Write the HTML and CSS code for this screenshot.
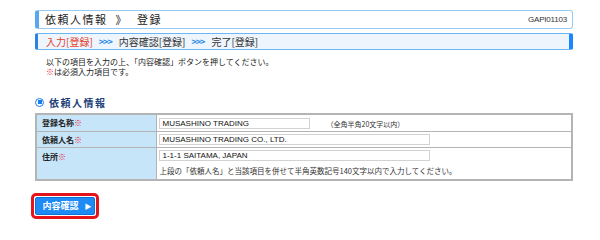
FILE: index.html
```html
<!DOCTYPE html>
<html lang="ja">
<head>
<meta charset="utf-8">
<link rel="stylesheet" href="styles.css">
</head>
<body>
<div class="page">
  <div class="header">
    <span class="title">依頼人情報<span class="sep">》</span>登録</span>
    <span class="code">GAPI01103</span>
  </div>
  <div class="steps">
    <span class="step current">入力[登録]</span>
    <span class="arrow">&gt;&gt;&gt;</span>
    <span class="step">内容確認[登録]</span>
    <span class="arrow">&gt;&gt;&gt;</span>
    <span class="step">完了[登録]</span>
  </div>
  <div class="intro">
    <p>以下の項目を入力の上、「内容確認」ボタンを押してください。</p>
    <p><span class="req">※</span>は必須入力項目です。</p>
  </div>
  <div class="section">
    <span class="bullet"><span class="dot"></span></span>
    <span class="section-title">依頼人情報</span>
  </div>
  <table class="form">
    <tr class="r1">
      <th>登録名称<span class="req">※</span></th>
      <td><div class="field"><span class="input w-short">MUSASHINO TRADING</span><span class="hint">（全角半角20文字以内）</span></div></td>
    </tr>
    <tr class="r2">
      <th>依頼人名<span class="req">※</span></th>
      <td><div class="field"><span class="input w-long">MUSASHINO TRADING CO., LTD.</span></div></td>
    </tr>
    <tr class="r3">
      <th>住所<span class="req">※</span></th>
      <td>
        <div class="field"><span class="input w-long">1-1-1 SAITAMA, JAPAN</span></div>
        <div class="note">上段の「依頼人名」と当該項目を併せて半角英数記号140文字以内で入力してください。</div>
      </td>
    </tr>
  </table>
  <div class="actions">
    <div class="focus-ring"><button class="btn">内容確認 <span class="tri">▶</span></button></div>
  </div>
</div>
</body>
</html>
```
FILE: styles.css
```css
* { box-sizing: border-box; }
html, body { margin: 0; padding: 0; background: #fff; }
body {
  font-family: "Noto Sans CJK JP", "Liberation Sans", sans-serif;
  color: #222;
  width: 600px;
  height: 231px;
  overflow: hidden;
}
.page { margin-left: 35px; width: 538px; padding-top: 10px; }

.header {
  height: 19px;
  border: 1px solid #95cbf2;
  border-left: 4px solid #5aa7ee;
  border-radius: 3px;
  display: flex;
  align-items: center;
  justify-content: space-between;
  padding: 0 5px 0 6px;
}
.title { font-size: 11px; letter-spacing: 1.5px; color: #222; line-height: 1; }
.sep { margin: 0 9px 0 8px; }
.code { font-family: "Liberation Sans", sans-serif; font-size: 8px; color: #333; letter-spacing: -0.2px; }

.steps {
  margin-top: 4px;
  height: 17px;
  background: #eef5fd;
  border: 1px solid #6db6f5;
  border-left: 3px solid #2a82e6;
  border-right: 4px solid #1a86ff;
  border-radius: 2px;
  display: flex;
  align-items: center;
  padding-left: 8px;
  font-size: 10px;
  line-height: 1;
}
.step { color: #333; }
.step.current { color: #e4402a; }
.arrow { color: #2a8ae4; font-size: 9px; font-weight: bold; letter-spacing: -1px; margin: 0 7px 0 6px; }

.intro { margin-top: 7px; padding-left: 11px; font-size: 8px; line-height: 9.5px; color: #222; }
.intro p { margin: 0; }
.req { color: #e8203a; }

.section { margin-top: 20px; display: flex; align-items: center; height: 12px; }
.bullet {
  width: 9px; height: 9px; border: 1.5px solid #1a7ee8; border-radius: 50%;
  display: flex; align-items: center; justify-content: center; margin-right: 5px;
}
.dot { width: 4px; height: 4px; background: #1a7ee8; }
.section-title { font-size: 10px; font-weight: bold; color: #1d3f78; letter-spacing: 1.5px; }

.form {
  margin-top: 5px;
  width: 538px;
  border-collapse: collapse;
  border: 2px solid #b4b4b4;
  font-size: 8px;
}
.form th, .form td { border: 1px solid #b4b4b4; padding: 0; }
.form th {
  width: 120px;
  background: #c7e5f8;
  text-align: left;
  font-weight: bold;
  padding-left: 5px;
  color: #222;
  vertical-align: middle;
}
.form .r3 th { vertical-align: top; padding-top: 3px; }
.form td { padding-left: 2px; vertical-align: top; }
.r1 { height: 17px; }
.r2 { height: 16px; }
.r3 { height: 33px; }
.field { display: flex; align-items: center; height: 14px; padding-top: 2px; }
.r1 .field { height: 15px; }
.input {
  display: block;
  height: 11px;
  border: 1px solid #d2d2d2;
  font-family: "Liberation Sans", sans-serif;
  font-size: 8px;
  line-height: 9px;
  padding-left: 3px;
  color: #111;
  background: #fff;
}
.w-short { width: 151px; }
.w-long { width: 271px; }
.hint { margin-left: 17px; font-size: 7px; color: #333; }
.note { font-size: 7.5px; margin-top: 4px; line-height: 10px; color: #333; padding-left: 1px; }

.actions { margin-top: 9px; margin-left: -4px; }
.focus-ring {
  display: inline-block;
  border: 3px solid #e5141b;
  border-radius: 5px;
  padding: 1px;
}
.btn {
  display: block;
  width: 60px;
  height: 18px;
  border: 1px solid #0f70d8;
  border-radius: 2px;
  background: #1d8af5;
  color: #fff;
  font-family: "Noto Sans CJK JP", sans-serif;
  font-size: 9px;
  font-weight: bold;
  padding: 0 0 0 4px;
  line-height: 16px;
}
.tri { font-size: 7px; margin-left: 4px; }
```
